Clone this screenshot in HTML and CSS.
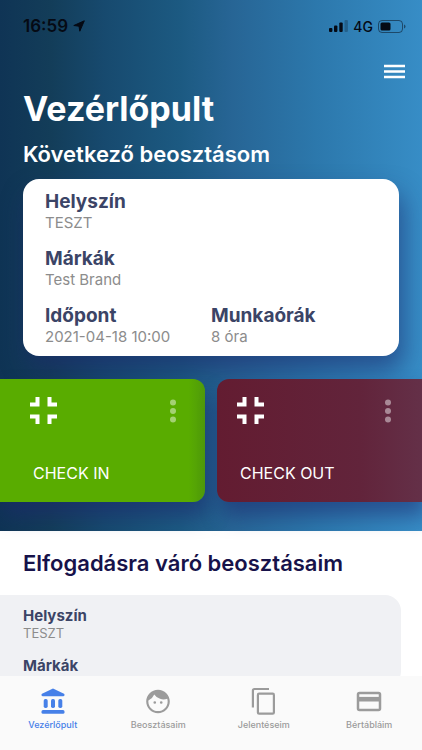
FILE: index.html
```html
<!DOCTYPE html>
<html lang="hu">
<head>
<meta charset="utf-8">
<meta name="viewport" content="width=device-width, initial-scale=1">
<title>Vezérlőpult</title>
<link rel="stylesheet" href="styles.css">
</head>
<body>
<main class="screen">
  <section class="hero">
    <div class="status">
      <span class="status-time">16:59
        <svg width="12" height="12" viewBox="0 0 12 12" aria-hidden="true"><path d="M11.300.8 6.800 11.200 6 6.200.8 5.500z" fill="currentColor" stroke="currentColor" stroke-linejoin="round"/></svg>
      </span>
      <span class="status-right">
        <svg width="19" height="12" viewBox="0 0 19 12" aria-hidden="true"><g fill="currentColor"><rect x="0" y="8" width="3.400" height="4" rx="1"/><rect x="5" y="5.500" width="3.400" height="6.500" rx="1"/><rect x="10.300" y="2.500" width="3.400" height="9.500" rx="1"/><rect x="15.500" y="0" width="3.400" height="12" rx="1" opacity=".25"/></g></svg>
        <span class="status-net">4G</span>
        <svg width="28" height="13" viewBox="0 0 28 13" aria-hidden="true"><rect x=".5" y=".5" width="24" height="12" rx="3.500" fill="none" stroke="currentColor" opacity=".5"/><rect x="2.500" y="2.500" width="10" height="8" rx="1.500" fill="currentColor"/><path d="M26 4.500q1.500.5 1.500 2t-1.500 2z" fill="currentColor" opacity=".5"/></svg>
      </span>
    </div>
    <div class="toolbar">
      <button class="menu" type="button" aria-label="Menü">
        <svg width="21" height="15" viewBox="0 0 21 15" aria-hidden="true"><path d="M0 2h21M0 7.500h21M0 13h21" stroke="#fff" stroke-width="2.400"/></svg>
      </button>
    </div>
    <h1 class="title">Vezérlőpult</h1>
    <h2 class="subtitle">Következő beosztásom</h2>
    <dl class="card">
      <div class="field field-wide"><dt>Helyszín</dt><dd>TESZT</dd></div>
      <div class="field field-wide"><dt>Márkák</dt><dd>Test Brand</dd></div>
      <div class="field"><dt>Időpont</dt><dd>2021-04-18 10:00</dd></div>
      <div class="field"><dt>Munkaórák</dt><dd>8 óra</dd></div>
    </dl>
    <div class="actions">
      <button class="action action-in" type="button">
        <span class="action-top">
          <svg width="27" height="27" viewBox="0 0 27 27" aria-hidden="true"><path d="M0 7.500h7.500V0M19.500 0v7.500H27M0 19.500h7.500V27M19.500 27v-7.500H27" fill="none" stroke="#fff" stroke-width="4"/></svg>
          <svg width="6" height="24" viewBox="0 0 6 24" aria-hidden="true"><g fill="#fff" opacity=".45"><circle cx="3" cy="3.500" r="3"/><circle cx="3" cy="12" r="3"/><circle cx="3" cy="20.500" r="3"/></g></svg>
        </span>
        <span class="action-label">CHECK IN</span>
      </button>
      <button class="action action-out" type="button">
        <span class="action-top">
          <svg width="27" height="27" viewBox="0 0 27 27" aria-hidden="true"><path d="M0 7.500h7.500V0M19.500 0v7.500H27M0 19.500h7.500V27M19.500 27v-7.500H27" fill="none" stroke="#fff" stroke-width="4"/></svg>
          <svg width="6" height="24" viewBox="0 0 6 24" aria-hidden="true"><g fill="#fff" opacity=".45"><circle cx="3" cy="3.500" r="3"/><circle cx="3" cy="12" r="3"/><circle cx="3" cy="20.500" r="3"/></g></svg>
        </span>
        <span class="action-label">CHECK OUT</span>
      </button>
    </div>
  </section>
  <section class="pending">
    <h2 class="pending-title">Elfogadásra váró beosztásaim</h2>
    <dl class="pending-card">
      <div class="field"><dt>Helyszín</dt><dd>TESZT</dd></div>
      <div class="field"><dt>Márkák</dt></div>
    </dl>
  </section>
</main>
<nav class="tabs">
  <a class="tab tab-active" href="#vezerlopult">
    <svg width="28" height="28" viewBox="0 0 28 28" aria-hidden="true"><g fill="currentColor"><path d="M14 1.500 25 6.800q.8.500.5 1.500t-1.300 1H3.800q-1 0-1.300-1T3 6.800z"/><rect x="4.700" y="12" width="4" height="9" rx="1.700"/><rect x="12" y="12" width="4" height="9" rx="1.700"/><rect x="19.300" y="12" width="4" height="9" rx="1.700"/><rect x="2.500" y="23" width="23" height="3.800" rx="1.500"/></g></svg>
    Vezérlőpult
  </a>
  <a class="tab" href="#beosztasaim">
    <svg width="28" height="28" viewBox="-.4 -.4 24.800 24.800" aria-hidden="true"><path transform="translate(.6 1) scale(.95)" d="M9 11.750a1.250 1.250 0 1 0 0 2.500 1.250 1.250 0 0 0 0-2.500zm6 0a1.250 1.250 0 1 0 0 2.500 1.250 1.250 0 0 0 0-2.500zM12 1C6 1 1 6 1 12s5 11 11 11 11-5 11-11S18 1 12 1zm0 20c-5 0-9-4-9-9 0-.3 0-.6.05-.9A10.500 10.500 0 0 0 8.500 5.500 10.500 10.500 0 0 0 20.600 9.500c.25.800.4 1.600.4 2.500 0 5-4 9-9 9z" fill="currentColor"/></svg>
    Beosztásaim
  </a>
  <a class="tab" href="#jelenteseim">
    <svg width="28" height="28" viewBox="0 0 28 28" aria-hidden="true"><g fill="none" stroke="currentColor" stroke-width="2.200" stroke-linejoin="round"><path d="M19 2H4.500q-1.600 0-1.600 1.600V20.500"/><rect x="7.900" y="6.700" width="16" height="20" rx="1.200"/></g></svg>
    Jelentéseim
  </a>
  <a class="tab" href="#bertablaim">
    <svg width="28" height="28" viewBox="0 0 28 28" aria-hidden="true"><rect x="3" y="6" width="22" height="17" rx="1.500" fill="none" stroke="currentColor" stroke-width="2.500"/><path d="M3 12.200h22" stroke="currentColor" stroke-width="4.600"/></svg>
    Bértábláim
  </a>
</nav>
</body>
</html>
```
FILE: styles.css
```css
* {
  box-sizing: border-box;
}

body {
  display: flex;
  flex-direction: column;
  height: 100vh;
  margin: 0;
  font-family: Inter, "Liberation Sans", sans-serif;
  background: #fff;
}

h1,
h2,
dl,
dd {
  margin: 0;
}

button {
  border: 0;
  padding: 0;
  font: inherit;
  color: inherit;
  background: none;
  cursor: pointer;
}

svg {
  display: block;
}

.screen {
  flex: 1;
  min-height: 0;
  overflow: hidden;
}

.hero {
  padding-bottom: 29px;
  color: #fff;
  background: linear-gradient(90deg, #0f3455 0%, #133d59 12%, #174a6f 25%, #1c5a82 43%, #276595 55%, #2c78ac 75%, #378dc6 100%);
}

.status {
  display: flex;
  justify-content: space-between;
  align-items: center;
  height: 52px;
  padding: 0 16px 0 23px;
  color: #050a14;
}

.status-time,
.status-right {
  display: flex;
  align-items: center;
  gap: 5px;
  font-size: 17px;
  font-weight: 600;
}

.status-net {
  font-size: 14px;
  font-weight: 500;
}

.toolbar {
  display: flex;
  justify-content: flex-end;
  padding: 12px 17px 0;
}

.title {
  padding: 8px 23px 0;
  font-size: 34px;
  line-height: 44px;
  font-weight: 700;
}

.subtitle {
  padding: 7px 23px 0;
  font-size: 22px;
  line-height: 32px;
  font-weight: 600;
}

.card {
  display: grid;
  grid-template-columns: 1fr 1fr;
  gap: 16px 0;
  margin: 9px 23px 0;
  padding: 12px 22px 10px;
  border-radius: 16px;
  background: #fff;
  box-shadow: 4px 14px 24px rgba(30, 40, 110, 0.55);
}

.field-wide {
  grid-column: 1 / -1;
}

.field dt {
  font-size: 19px;
  line-height: 22px;
  font-weight: 700;
  color: #3b4466;
}

.field dd {
  font-size: 15px;
  line-height: 19px;
  font-weight: 400;
  color: #8c8c8c;
}

.actions {
  display: grid;
  grid-template-columns: 1fr 1fr;
  gap: 12px;
  margin-top: 23px;
}

.action {
  display: flex;
  flex-direction: column;
  justify-content: space-between;
  height: 123px;
  text-align: left;
  box-shadow: 4px 14px 20px rgba(30, 40, 110, 0.55);
}

.action-in {
  padding: 18px 29px 18px 30px;
  border-radius: 0 12px 12px 0;
  background: linear-gradient(90deg, #59ac00 92%, #4f9a0b);
}

.action-out {
  padding: 18px 31px 18px 20px;
  border-radius: 12px 0 0 12px;
  background: linear-gradient(90deg, #631c31, #62243b 70%, #643048);
}

.action-top {
  display: flex;
  justify-content: space-between;
  align-items: center;
  width: 100%;
}

.action-label {
  padding-left: 3px;
  font-size: 16px;
  line-height: 22px;
}

.pending-title {
  padding: 16px 23px;
  font-size: 22px;
  line-height: 32px;
  font-weight: 600;
  color: #17124a;
}

.pending-card {
  display: grid;
  gap: 16px;
  margin-right: 21px;
  padding: 12px 23px;
  border-radius: 0 16px 16px 0;
  background: #f0f1f4;
}

.pending-card dt {
  font-size: 15px;
  line-height: 18px;
}

.pending-card dd {
  font-size: 13px;
  line-height: 16px;
}

.tabs {
  display: grid;
  grid-template-columns: repeat(4, 1fr);
  height: 74px;
  padding-top: 11px;
  background: #fafafa;
}

.tab {
  display: flex;
  flex-direction: column;
  align-items: center;
  gap: 4px;
  font-size: 9px;
  line-height: 12px;
  font-weight: 500;
  color: #9b9b9b;
  text-decoration: none;
}

.tab-active {
  color: #4680e8;
}
```
